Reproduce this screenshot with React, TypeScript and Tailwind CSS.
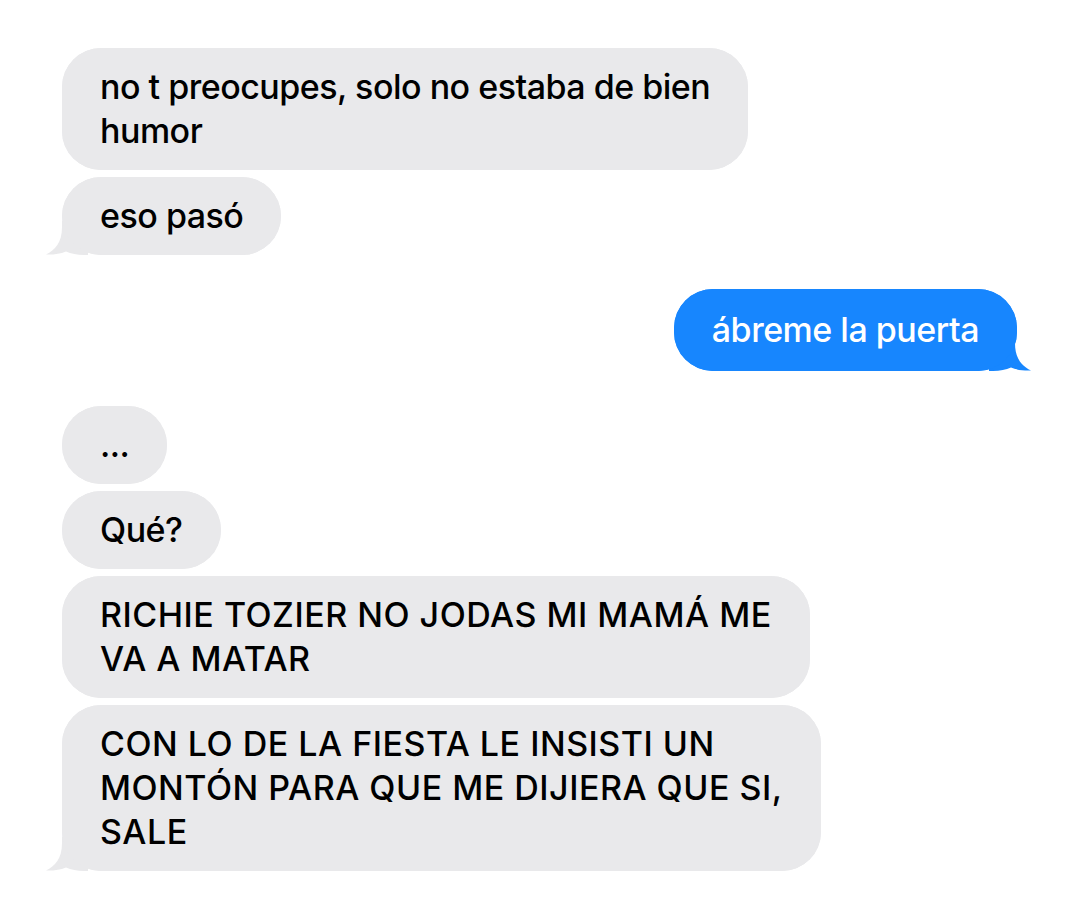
import React from 'react';

type Side = 'left' | 'right';

interface BubbleProps {
  side: Side;
  tail?: boolean;
  caps?: boolean;
  children: React.ReactNode;
}

// iMessage style tail, drawn in the bubble's colour
const Tail: React.FC<{ side: Side }> = ({ side }) => {
  if (side === 'left') {
    return (
      <svg
        className="absolute bottom-0 left-[-16px] h-[34px] w-[50px]"
        viewBox="0 0 50 34"
        fill="#e9e9eb"
      >
        <path d="M16 0 L42 0 L42 34 L38 34 C31 34 25 32.5 20 30.5 C14 33 7 33.8 0 33.5 C9 29 16 22 16 6 Z" />
      </svg>
    );
  }
  return (
    <svg
      className="absolute bottom-0 right-[-14px] h-[34px] w-[50px]"
      viewBox="0 0 50 34"
      fill="#1786fe"
    >
      <path d="M34 0 L8 0 L8 34 L12 34 C19 34 25 32.5 30 30.5 C36 33 43 33.8 50 33.5 C41 29 34 22 34 6 Z" />
    </svg>
  );
};

const Bubble: React.FC<BubbleProps> = ({ side, tail, caps, children }) => {
  const bg = side === 'left' ? 'bg-[#e9e9eb] text-black self-start' : 'bg-[#1786fe] text-white self-end';
  return (
    <div className={`relative rounded-[39px] ${bg}`}>
      {tail && <Tail side={side} />}
      <div
        className={`relative rounded-[39px] px-[38px] py-[17px] text-[34px] font-medium leading-[44px] ${
          side === 'left' ? 'bg-[#e9e9eb]' : 'bg-[#1786fe]'
        } ${caps ? 'tracking-[0.5px]' : 'tracking-[-0.5px]'}`}
      >
        {children}
      </div>
    </div>
  );
};

export default function App() {
  return (
    <div className="min-h-screen bg-white px-[62px] pt-[48px] font-['Inter',sans-serif]">
      <div className="flex flex-col gap-[7px]">
        <Bubble side="left">
          no t preocupes, solo no estaba de bien
          <br />
          humor
        </Bubble>
        <Bubble side="left" tail>
          eso pasó
        </Bubble>
      </div>

      <div className="mt-[34px] flex flex-col">
        <Bubble side="right" tail>
          <span className="block py-[2px]">ábreme la puerta</span>
        </Bubble>
      </div>

      <div className="mt-[35px] flex flex-col gap-[7px]">
        <Bubble side="left">...</Bubble>
        <Bubble side="left">Qué?</Bubble>
        <Bubble side="left" caps>
          RICHIE TOZIER NO JODAS MI MAMÁ ME
          <br />
          VA A MATAR
        </Bubble>
        <Bubble side="left" tail caps>
          CON LO DE LA FIESTA LE INSISTI UN
          <br />
          MONTÓN PARA QUE ME DIJIERA QUE SI,
          <br />
          SALE
        </Bubble>
      </div>
    </div>
  );
}
